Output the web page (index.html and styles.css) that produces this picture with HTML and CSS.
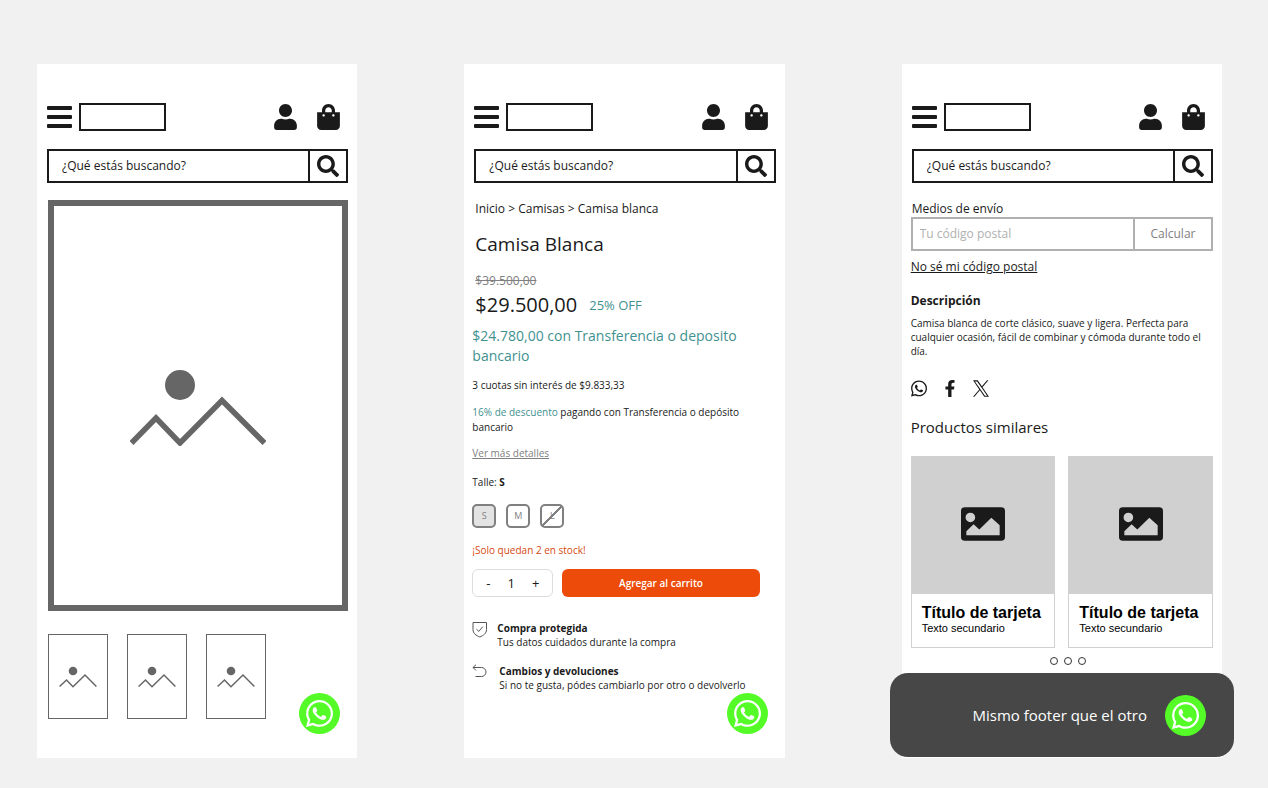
FILE: index.html
```html
<!DOCTYPE html>
<html lang="es">
<head>
<meta charset="utf-8">
<meta name="viewport" content="width=device-width, initial-scale=1">
<title>Camisa Blanca</title>
<link rel="stylesheet" href="styles.css">
</head>
<body>
<svg class="sprite" aria-hidden="true">
  <symbol id="bars" viewBox="0 0 25 24"><rect y="1" width="25" height="4" rx="1"/><rect y="10" width="25" height="4" rx="1"/><rect y="19" width="25" height="4" rx="1"/></symbol>
  <symbol id="user" viewBox="0 0 448 512"><path d="M224 256c70.700 0 128-57.300 128-128S294.700 0 224 0 96 57.300 96 128s57.300 128 128 128zm89.600 32h-16.700c-22.200 10.200-46.900 16-72.900 16s-50.600-5.800-72.900-16h-16.700C60.200 288 0 348.200 0 422.400V464c0 26.500 21.500 48 48 48h352c26.500 0 48-21.500 48-48v-41.600c0-74.200-60.200-134.400-134.400-134.400z"/></symbol>
  <symbol id="bag" viewBox="0 0 448 512"><path d="M352 160v-32C352 57.420 294.579 0 224 0 153.420 0 96 57.420 96 128v32H0v272c0 44.183 35.817 80 80 80h288c44.183 0 80-35.817 80-80V160h-96zm-192-32c0-35.290 28.710-64 64-64s64 28.710 64 64v32H160v-32zm160 120c-13.255 0-24-10.745-24-24s10.745-24 24-24 24 10.745 24 24-10.745 24-24 24zm-192 0c-13.255 0-24-10.745-24-24s10.745-24 24-24 24 10.745 24 24-10.745 24-24 24z"/></symbol>
  <symbol id="search" viewBox="0 0 512 512"><path d="M505 442.700L405.300 343c-4.500-4.500-10.600-7-17-7H372c27.600-35.300 44-79.700 44-128C416 93.100 322.900 0 208 0S0 93.100 0 208s93.100 208 208 208c48.300 0 92.700-16.400 128-44v16.300c0 6.400 2.500 12.500 7 17l99.700 99.700c9.400 9.400 24.600 9.400 33.900 0l28.300-28.300c9.400-9.400 9.400-24.600.1-34zM208 336c-70.700 0-128-57.200-128-128 0-70.700 57.200-128 128-128 70.700 0 128 57.200 128 128 0 70.700-57.200 128-128 128z"/></symbol>
  <symbol id="whatsapp" viewBox="0 32 448 448"><path d="M380.900 97.100C339 55.100 283.200 32 223.900 32c-122.400 0-222 99.600-222 222 0 39.100 10.200 77.300 29.600 111L0 480l117.700-30.900c32.400 17.700 68.900 27 106.100 27h.1c122.300 0 224.100-99.600 224.100-222 0-59.300-25.200-115-67.100-157zm-157 341.600c-33.200 0-65.700-8.900-94-25.700l-6.700-4-69.800 18.300L72 359.200l-4.400-7c-18.500-29.400-28.200-63.300-28.200-98.200 0-101.700 82.800-184.500 184.600-184.500 49.300 0 95.600 19.200 130.400 54.100 34.800 34.900 56.200 81.200 56.100 130.500 0 101.800-84.900 184.600-186.600 184.600zm101.200-138.200c-5.500-2.800-32.800-16.200-37.900-18-5.100-1.900-8.800-2.800-12.500 2.800-3.700 5.600-14.300 18-17.600 21.800-3.200 3.700-6.500 4.200-12 1.400-32.600-16.300-54-29.100-75.500-66-5.700-9.800 5.700-9.100 16.300-30.300 1.800-3.700.9-6.900-.5-9.700-1.400-2.800-12.500-30.100-17.100-41.200-4.500-10.800-9.100-9.300-12.500-9.500-3.200-.2-6.900-.2-10.600-.2-3.700 0-9.700 1.400-14.800 6.900-5.100 5.600-19.400 19-19.400 46.300 0 27.300 19.900 53.700 22.600 57.400 2.800 3.700 39.100 59.700 94.800 83.800 35.200 15.200 49 16.500 66.600 13.900 10.700-1.600 32.800-13.400 37.400-26.400 4.600-13 4.600-24.100 3.200-26.400-1.300-2.500-5-3.900-10.500-6.600z"/></symbol>
  <symbol id="facebook" viewBox="0 0 320 512"><path d="M279.140 288l14.220-92.660h-88.910v-60.130c0-25.350 12.420-50.060 52.240-50.060h40.420V6.260S260.430 0 225.360 0c-73.220 0-121.080 44.380-121.080 124.720v70.620H22.890V288h81.390v224h100.170V288z"/></symbol>
  <symbol id="x" viewBox="0 0 1200 1227"><path d="M714.163 519.284L1160.890 0H1055.030L667.137 450.887L357.328 0H0L468.492 681.821L0 1226.370H105.866L515.491 750.218L842.672 1226.370H1200L714.137 519.284H714.163ZM569.165 687.828L521.697 619.934L144.011 79.694H306.615L611.412 515.685L658.880 583.579L1055.080 1150.300H892.476L569.165 687.854V687.828Z"/></symbol>
  <symbol id="picture" viewBox="0 0 512 392"><path fill-rule="evenodd" d="M44 0h424a44 44 0 0 1 44 44v304a44 44 0 0 1-44 44H44a44 44 0 0 1-44-44V44A44 44 0 0 1 44 0zM62 326h388V210L353 124 213 260l-66-62-85 81zM109 64a56 56 0 1 0 0 112 56 56 0 0 0 0-112z"/></symbol>
  <symbol id="photo" viewBox="0 0 136 76"><circle cx="50" cy="15" r="15"/><path d="M1.500 73 26 48 50 73 92 30.500 134.500 73" fill="none" stroke="currentColor" stroke-width="5.500"/></symbol>
  <symbol id="photo-small" viewBox="0 0 38 22"><circle cx="14" cy="5" r="4.300"/><path d="M.6 20.500 7.500 14 14 20.800 26 9 37.400 20.500" fill="none" stroke="currentColor" stroke-width="1.500"/></symbol>
  <symbol id="shield" viewBox="0 0 16 17"><path d="M1 1.500h13.500v7.200c0 3.600-3 5.800-6.700 7.300C4 14.500 1 12.300 1 8.700zM4.500 8.200l2.300 2.200 4-4.700" fill="none" stroke="currentColor"/></symbol>
  <symbol id="return" viewBox="0 0 16 14"><path d="M4 .7 1 3.500l3 3M1 3.500h8.500a4.500 4.500 0 0 1 0 9H3.500" fill="none" stroke="currentColor"/></symbol>
</svg>

<main class="board">
  <section class="screen" aria-label="Galería">
    <header class="topbar">
      <button class="icon-button" type="button" aria-label="Menú"><svg class="icon-bars"><use href="#bars"/></svg></button>
      <a class="logo" href="#" aria-label="Inicio"></a>
      <a class="account" href="#" aria-label="Mi cuenta"><svg class="icon-top"><use href="#user"/></svg></a>
      <a class="cart" href="#" aria-label="Carrito"><svg class="icon-top"><use href="#bag"/></svg></a>
    </header>
    <form class="search">
      <input class="search-input" type="search" placeholder="¿Qué estás buscando?" aria-label="Buscar">
      <button class="search-button" type="button" aria-label="Buscar"><svg class="icon-search"><use href="#search"/></svg></button>
    </form>
    <div class="gallery">
      <div class="hero"><svg class="hero-photo"><use href="#photo"/></svg></div>
      <div class="thumbs">
        <button class="thumb" type="button" aria-label="Foto 1"><svg class="thumb-photo"><use href="#photo-small"/></svg></button>
        <button class="thumb" type="button" aria-label="Foto 2"><svg class="thumb-photo"><use href="#photo-small"/></svg></button>
        <button class="thumb" type="button" aria-label="Foto 3"><svg class="thumb-photo"><use href="#photo-small"/></svg></button>
      </div>
    </div>
    <a class="chat chat-floating" href="#" aria-label="WhatsApp"><svg class="icon-chat"><use href="#whatsapp"/></svg></a>
  </section>

  <section class="screen" aria-label="Producto">
    <header class="topbar">
      <button class="icon-button" type="button" aria-label="Menú"><svg class="icon-bars"><use href="#bars"/></svg></button>
      <a class="logo" href="#" aria-label="Inicio"></a>
      <a class="account" href="#" aria-label="Mi cuenta"><svg class="icon-top"><use href="#user"/></svg></a>
      <a class="cart" href="#" aria-label="Carrito"><svg class="icon-top"><use href="#bag"/></svg></a>
    </header>
    <form class="search">
      <input class="search-input" type="search" placeholder="¿Qué estás buscando?" aria-label="Buscar">
      <button class="search-button" type="button" aria-label="Buscar"><svg class="icon-search"><use href="#search"/></svg></button>
    </form>
    <div class="product">
      <div class="product-head">
        <nav class="breadcrumb" aria-label="Ruta"><a href="#">Inicio</a> &gt; <a href="#">Camisas</a> &gt; <a href="#">Camisa blanca</a></nav>
        <h1 class="product-title">Camisa Blanca</h1>
        <s class="old-price">$39.500,00</s>
        <div class="price-row"><span class="price">$29.500,00</span><span class="discount">25% OFF</span></div>
      </div>
      <p class="transfer">$24.780,00 con Transferencia o deposito bancario</p>
      <p class="installments">3 cuotas sin interés de $9.833,33</p>
      <p class="promo"><span class="promo-rate">16% de descuento</span> pagando con Transferencia o depósito bancario</p>
      <a class="details" href="#">Ver más detalles</a>
      <p class="size-label">Talle: <b>S</b></p>
      <div class="sizes">
        <button class="size size-selected" type="button">S</button>
        <button class="size" type="button">M</button>
        <button class="size size-out" type="button" disabled>L</button>
      </div>
      <p class="stock">¡Solo quedan 2 en stock!</p>
      <div class="buy">
        <div class="quantity">
          <button class="step" type="button" aria-label="Restar">-</button>
          <output class="amount">1</output>
          <button class="step" type="button" aria-label="Sumar">+</button>
        </div>
        <button class="add" type="button">Agregar al carrito</button>
      </div>
      <ul class="benefits">
        <li class="benefit"><svg class="icon-shield"><use href="#shield"/></svg><div><b>Compra protegida</b><br>Tus datos cuidados durante la compra</div></li>
        <li class="benefit benefit-wide"><svg class="icon-return"><use href="#return"/></svg><div><b>Cambios y devoluciones</b><br>Si no te gusta, pódes cambiarlo por otro o devolverlo</div></li>
      </ul>
    </div>
    <a class="chat chat-floating" href="#" aria-label="WhatsApp"><svg class="icon-chat"><use href="#whatsapp"/></svg></a>
  </section>

  <section class="screen screen-last" aria-label="Envío y descripción">
    <header class="topbar">
      <button class="icon-button" type="button" aria-label="Menú"><svg class="icon-bars"><use href="#bars"/></svg></button>
      <a class="logo" href="#" aria-label="Inicio"></a>
      <a class="account" href="#" aria-label="Mi cuenta"><svg class="icon-top"><use href="#user"/></svg></a>
      <a class="cart" href="#" aria-label="Carrito"><svg class="icon-top"><use href="#bag"/></svg></a>
    </header>
    <form class="search">
      <input class="search-input" type="search" placeholder="¿Qué estás buscando?" aria-label="Buscar">
      <button class="search-button" type="button" aria-label="Buscar"><svg class="icon-search"><use href="#search"/></svg></button>
    </form>
    <div class="info">
      <label class="shipping-label" for="postal">Medios de envío</label>
      <form class="shipping">
        <input class="postal" id="postal" type="text" placeholder="Tu código postal">
        <button class="calculate" type="button">Calcular</button>
      </form>
      <a class="postal-help" href="#">No sé mi código postal</a>
      <h2 class="description-title">Descripción</h2>
      <p class="description">Camisa blanca de corte clásico, suave y ligera. Perfecta para cualquier ocasión, fácil de combinar y cómoda durante todo el día.</p>
      <div class="share">
        <a href="#" aria-label="WhatsApp"><svg class="icon-share"><use href="#whatsapp"/></svg></a>
        <a href="#" aria-label="Facebook"><svg class="icon-share"><use href="#facebook"/></svg></a>
        <a href="#" aria-label="X"><svg class="icon-share"><use href="#x"/></svg></a>
      </div>
      <h2 class="similar-title">Productos similares</h2>
      <div class="cards">
        <article class="card">
          <div class="card-media"><svg class="icon-picture"><use href="#picture"/></svg></div>
          <div class="card-body"><h3 class="card-title">Título de tarjeta</h3><p class="card-text">Texto secundario</p></div>
        </article>
        <article class="card">
          <div class="card-media"><svg class="icon-picture"><use href="#picture"/></svg></div>
          <div class="card-body"><h3 class="card-title">Título de tarjeta</h3><p class="card-text">Texto secundario</p></div>
        </article>
      </div>
      <div class="dots">
        <button class="dot" type="button" aria-label="Página 1"></button>
        <button class="dot" type="button" aria-label="Página 2"></button>
        <button class="dot" type="button" aria-label="Página 3"></button>
      </div>
    </div>
    <footer class="footer-note">
      <span>Mismo footer que el otro</span>
      <a class="chat" href="#" aria-label="WhatsApp"><svg class="icon-chat"><use href="#whatsapp"/></svg></a>
    </footer>
  </section>
</main>
</body>
</html>
```

FILE: styles.css
```css
*, *::before, *::after { box-sizing: border-box; }

body {
  margin: 0;
  background: #f1f1f1;
  color: #1a1a1a;
  font: 12px/18px "Open Sans", "Noto Sans", sans-serif;
}

h1, h2, h3, p, ul { margin: 0; padding: 0; font-weight: 400; }
ul { list-style: none; }
a { color: inherit; text-decoration: none; }
button, input { margin: 0; padding: 0; border: 0; border-radius: 0; background: none; color: inherit; font: inherit; }
svg { display: block; fill: currentColor; }
.sprite { position: absolute; width: 0; height: 0; }

.board { display: flex; gap: 107px; padding: 64px 46px 30px 37px; }
.screen { position: relative; display: flex; flex: 1; flex-direction: column; min-width: 0; min-height: 694px; padding-top: 39px; background: #fff; }
.screen-last { margin-left: 10px; }

/* Header */
.topbar { display: flex; align-items: center; margin: 0 17px 0 10px; }
.icon-bars { width: 25px; height: 24px; }
.logo { width: 87px; height: 28px; margin-left: 7px; border: 2px solid #1a1a1a; }
.account { margin-left: auto; }
.cart { margin-left: 20px; }
.icon-top { width: 23px; height: 26px; }
.search { display: flex; height: 34px; margin: 18px 9px 0 10px; border: 2px solid #1a1a1a; }
.search-input { flex: 1; min-width: 0; padding-left: 13px; outline: 0; }
.search-input::placeholder { color: #1a1a1a; opacity: 1; }
.search-button { display: flex; align-items: center; justify-content: center; width: 38px; border-left: 2px solid #1a1a1a; }
.icon-search { width: 22px; height: 22px; }

/* Gallery */
.gallery { padding: 17px 9px 0 11px; color: #666; }
.hero { display: flex; align-items: center; justify-content: center; aspect-ratio: 300 / 411; padding-top: 4px; border: 6px solid #666; }
.hero-photo { width: 136px; height: 76px; }
.thumbs { display: flex; gap: 19px; margin-top: 23px; }
.thumb { display: flex; align-items: center; justify-content: center; width: 60px; height: 85px; border: 1px solid #666; }
.thumb-photo { width: 38px; height: 22px; }

.chat { display: flex; align-items: center; justify-content: center; width: 41px; height: 41px; border-radius: 50%; background: #54fb27; color: #fff; }
.chat-floating { position: absolute; right: 17px; bottom: 24px; }
.icon-chat { width: 27px; height: 27px; }

/* Product */
.product { padding: 17px 25px 0 8px; font-size: 10px; line-height: 16px; }
.product-head { padding-left: 3px; }
.breadcrumb { font-size: 12px; line-height: 18px; }
.product-title { margin-top: 12px; font-size: 19px; line-height: 28px; }
.old-price { display: block; margin-top: 15px; color: #808080; font-size: 12px; line-height: 16px; }
.price-row { display: flex; align-items: center; gap: 12px; margin-top: 2px; line-height: 28px; }
.price { font-size: 20px; }
.discount { color: #3f9190; font-size: 13px; }
.transfer { margin-top: 7px; color: #3f9190; font-size: 14px; line-height: 20px; }
.installments { margin-top: 11px; }
.promo { margin-top: 12px; line-height: 15px; }
.promo-rate { color: #3f9190; }
.details { display: block; margin-top: 10px; color: #808080; text-decoration: underline; }
.size-label { margin-top: 13px; }
.sizes { display: flex; gap: 10px; margin-top: 14px; }
.size { width: 24px; height: 24px; border: 2px solid #808080; border-radius: 5px; color: #808080; font-size: 9px; line-height: 20px; }
.size-selected { background: #e3e3e3; }
.size-out { background: linear-gradient(135deg, transparent 47%, #808080 47%, #808080 53%, transparent 53%); }
.stock { margin-top: 14px; color: #d6490f; }
.buy { display: flex; gap: 9px; margin-top: 11px; }
.quantity { display: flex; align-items: center; justify-content: space-between; width: 81px; height: 28px; padding: 0 13px; border: 1px solid #dcdcdc; border-radius: 6px; font-size: 13px; }
.add { flex: 1; border-radius: 6px; background: #ec4b0a; color: #fff; font-weight: 600; }
.benefits { display: grid; gap: 15px; margin-top: 24px; line-height: 14px; white-space: nowrap; }
.benefit { display: flex; gap: 9px; }
.benefit-wide { gap: 11px; }
.icon-shield { width: 16px; height: 17px; color: #555; }
.icon-return { width: 16px; height: 14px; color: #555; }

/* Shipping and description */
.info { padding: 17px 9px 0; }
.shipping-label { display: block; height: 17px; padding-left: 1px; }
.shipping { display: flex; height: 34px; border: 2px solid #b0b0b0; color: #808080; }
.postal { flex: 1; min-width: 0; padding-left: 7px; outline: 0; }
.postal::placeholder { color: #b0b0b0; opacity: 1; }
.calculate { width: 78px; border-left: 2px solid #b0b0b0; }
.postal-help { display: block; margin-top: 7px; text-decoration: underline; }
.description-title { margin-top: 16px; font-size: 12px; font-weight: 700; line-height: 18px; }
.description { margin-top: 6px; font-size: 10px; line-height: 14px; }
.share { display: flex; gap: 15px; margin-top: 22px; }
.icon-share { width: 16px; height: 17px; }
.similar-title { margin-top: 20px; font-size: 15px; line-height: 20px; }
.cards { display: grid; grid-template-columns: 1fr 1fr; gap: 13px; margin-top: 19px; }
.card { border: 1px solid #d0d0d0; color: #000; font-family: "Liberation Sans", Arial, sans-serif; }
.card-media { display: flex; align-items: center; justify-content: center; height: 137px; padding-bottom: 4px; background: #d0d0d0; color: #1a1a1a; }
.icon-picture { width: 44px; height: 34px; }
.card-body { padding: 10px 0 12px 10px; white-space: nowrap; }
.card-title { font-size: 16px; font-weight: 700; line-height: 18px; }
.card-text { font-size: 11px; line-height: 13px; }
.dots { display: flex; justify-content: center; gap: 6px; margin-top: 9px; padding-left: 13px; }
.dot { width: 8px; height: 8px; border: 1px solid #333; border-radius: 50%; }
.footer-note { display: flex; align-items: center; justify-content: flex-end; gap: 18px; height: 84px; margin: auto -12px 1px; padding-right: 28px; border-radius: 18px; background: #474747; color: #fff; font-size: 15px; font-weight: 500; }
```
